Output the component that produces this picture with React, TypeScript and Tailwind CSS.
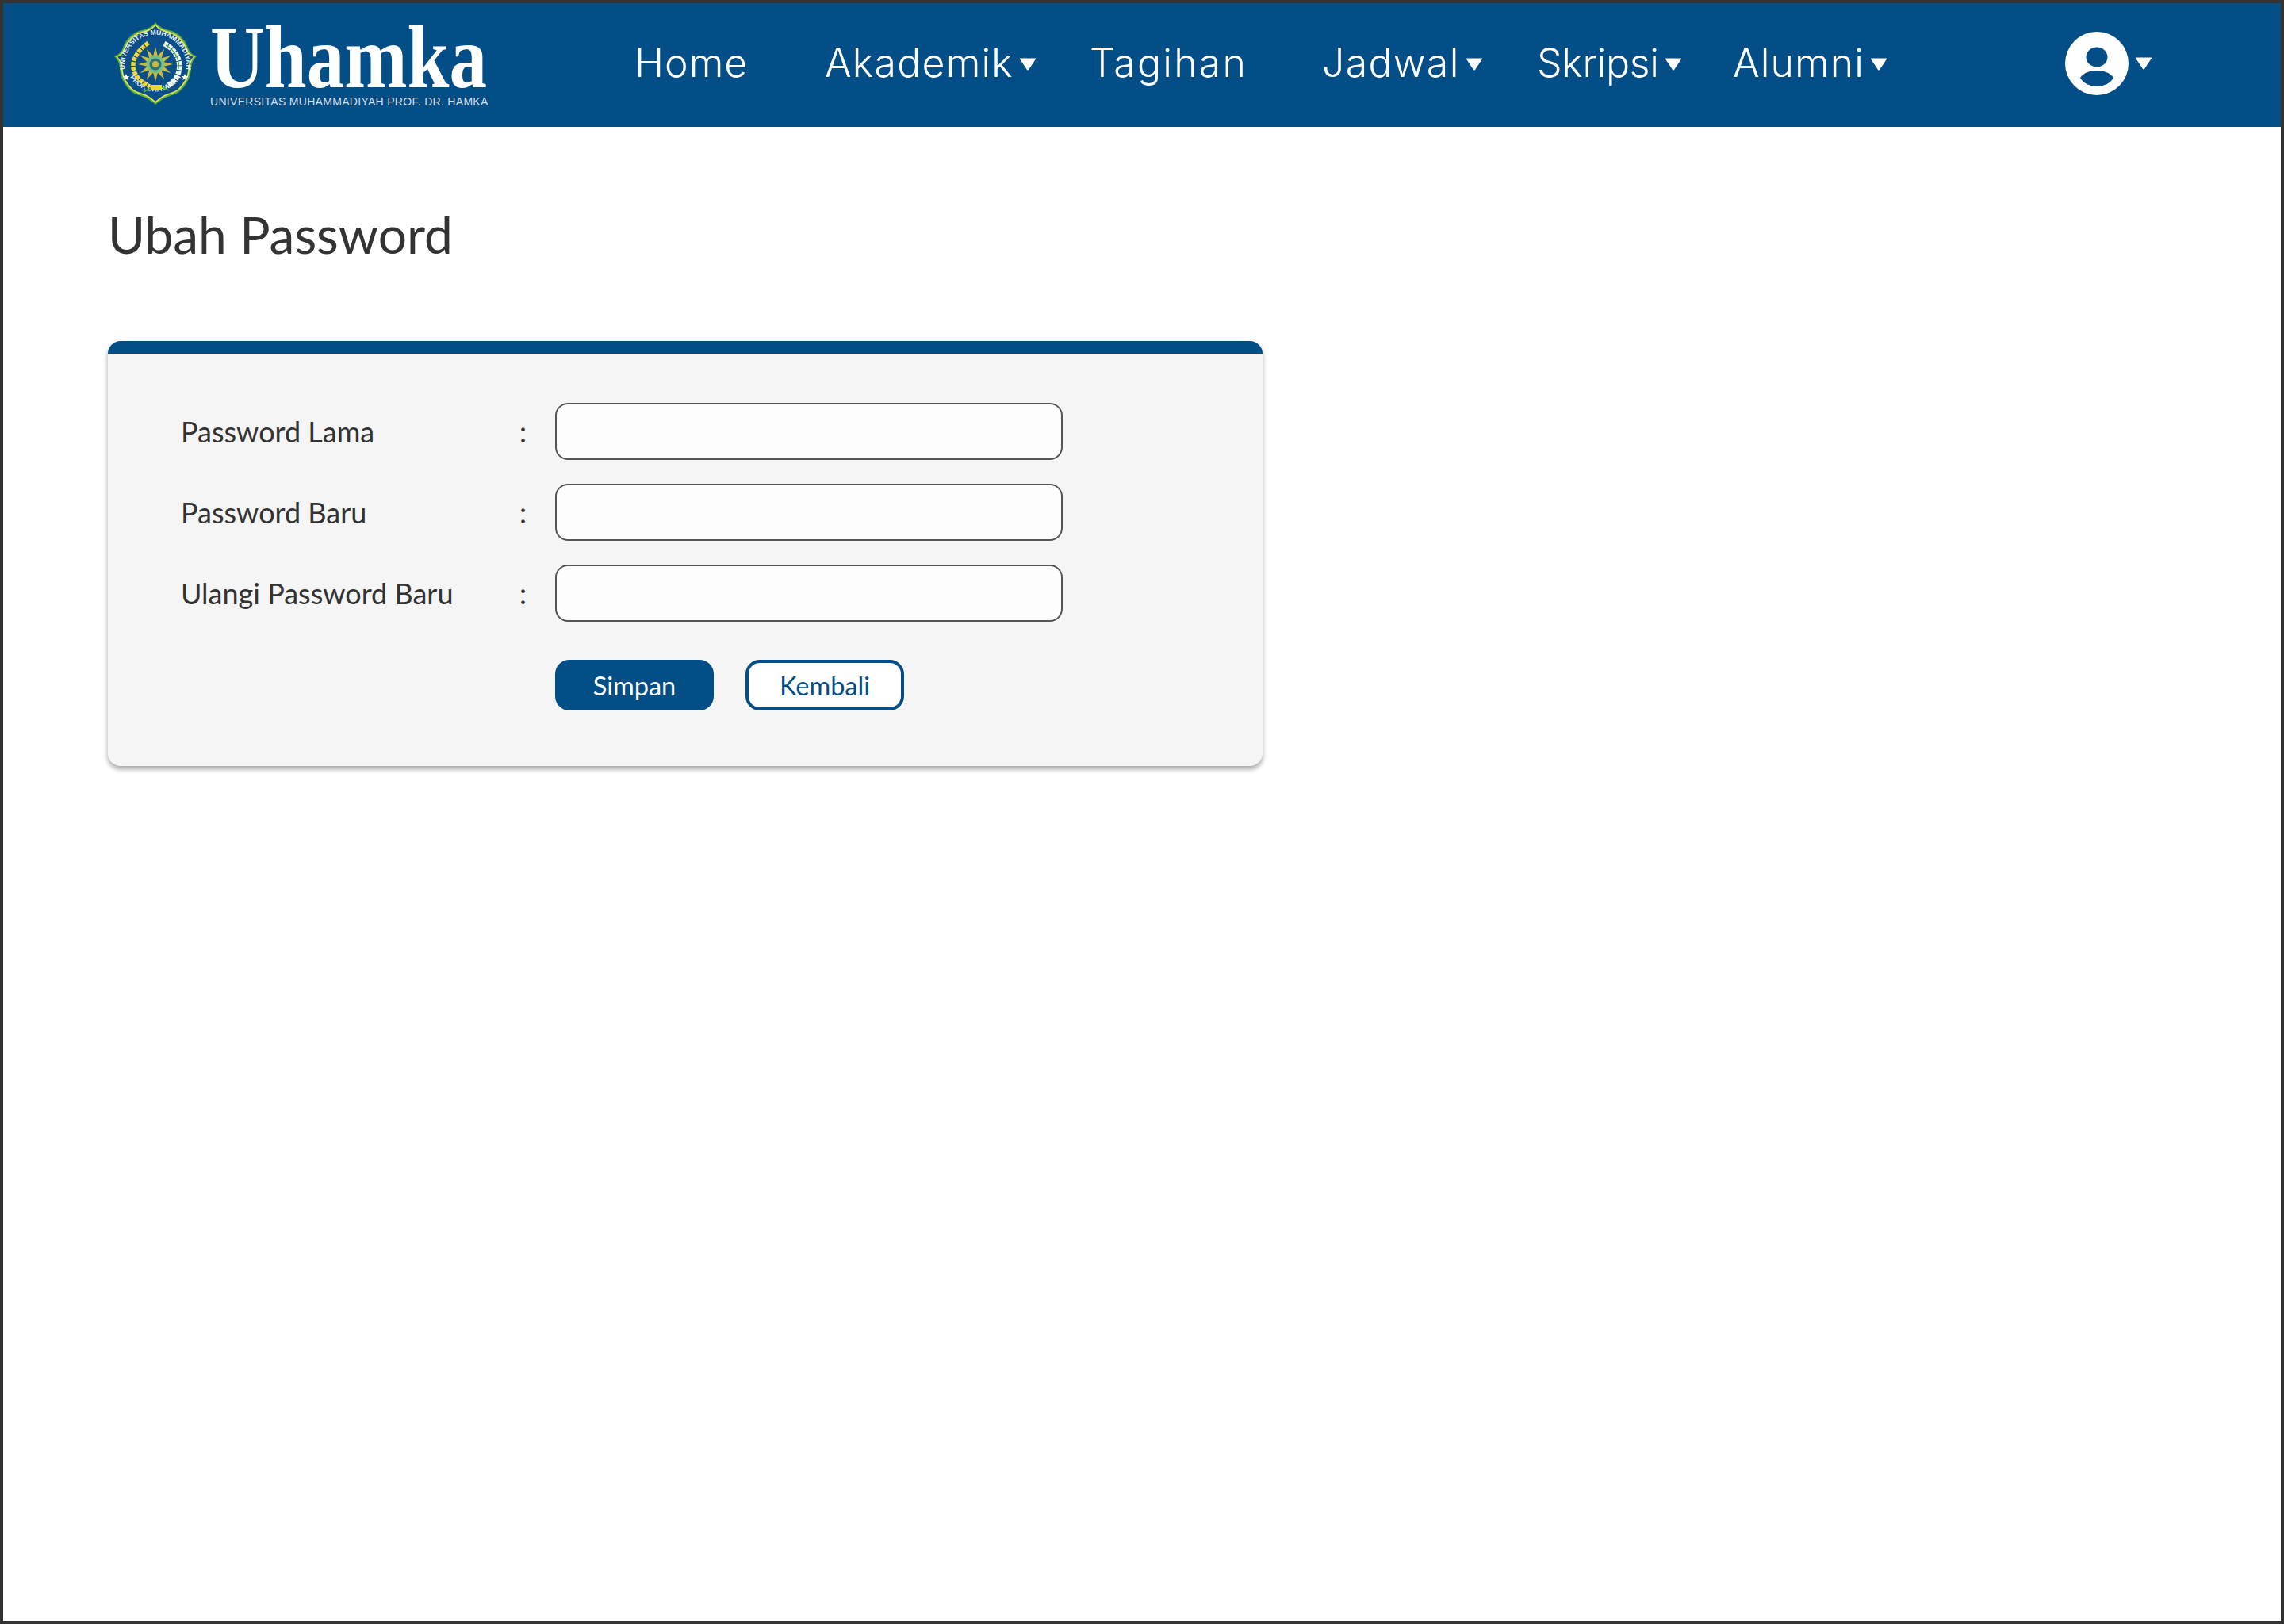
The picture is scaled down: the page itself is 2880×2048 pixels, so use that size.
import React from 'react';

const navItems = [
  { label: 'Home', width: 'w-[240px]', tracking: 'tracking-[1px]', caret: false },
  { label: 'Akademik', width: 'w-[334px]', tracking: 'tracking-[1.2px]', caret: true },
  { label: 'Tagihan', width: 'w-[293px]', tracking: 'tracking-[2.2px]', caret: false },
  { label: 'Jadwal', width: 'w-[271px]', tracking: 'tracking-[1.3px]', caret: true },
  { label: 'Skripsi', width: 'w-[247px]', tracking: 'tracking-[-0.3px]', caret: true },
  { label: 'Alumni', width: 'w-[250px]', tracking: 'tracking-[1.1px]', caret: true },
];

const fields = ['Password Lama', 'Password Baru', 'Ulangi Password Baru'];

const Caret: React.FC<{ className: string }> = ({ className }) => (
  <svg width="22" height="16" viewBox="0 0 22 16" className={className}>
    <path d="M1 1.5 Q0.5 0.5 2 0.5 H20 Q21.5 0.5 21 1.5 L12 15 Q11 16 10 15 Z" fill="#fff" />
  </svg>
);

const Emblem: React.FC = () => {
  const shape =
    'M53 1 C58 8 66 10 74 12 C84 16 91 24 94 33 C96 39 100 42 105 44 C101 48 98 53 98 60 C97 72 92 80 84 88 C78 93 72 93 66 96 C61 98 57 102 53 105 C49 102 45 98 40 96 C34 93 28 93 22 88 C14 80 9 72 8 60 C8 53 5 48 1 44 C6 42 10 39 12 33 C15 24 22 16 32 12 C40 10 48 8 53 1 Z';
  const points: string[] = [];
  for (let i = 0; i < 24; i++) {
    const r = i % 2 === 0 ? 22 : 11;
    const a = (i * Math.PI) / 12;
    points.push(`${53 + r * Math.sin(a)},${54 - r * Math.cos(a)}`);
  }
  return (
    <svg width="106" height="106" viewBox="0 0 106 106" className="shrink-0">
      <path d={shape} fill="#4fae4a" />
      <path d={shape} fill="#e3e04a" transform="translate(53 53) scale(.96) translate(-53 -53)" />
      <path d={shape} fill="#0b4f8a" transform="translate(53 53) scale(.92) translate(-53 -53)" />
      <defs>
        <path id="arcTop" d="M14.5 62 A39 39 0 1 1 91.5 62" />
        <path id="arcBottom" d="M21 70 A37 37 0 0 0 85 70" />
      </defs>
      <text fontFamily="'Liberation Sans', sans-serif" fontSize="8.6" fontWeight="700" fill="#e8eef4">
        <textPath href="#arcTop" startOffset="50%" textAnchor="middle">UNIVERSITAS MUHAMMADIYAH</textPath>
      </text>
      <text fontFamily="'Liberation Sans', sans-serif" fontSize="8.6" fontWeight="700" fill="#e8eef4">
        <textPath href="#arcBottom" startOffset="50%" textAnchor="middle">PROF. DR. HAMKA</textPath>
      </text>
      <path d="M17 69 l1.2 3 3.2 .1 -2.5 2 .9 3 -2.8 -1.7 -2.8 1.7 .9 -3 -2.5 -2 3.2 -.1 Z" fill="#fff" transform="translate(-1 -3)" />
      <path d="M89 69 l1.2 3 3.2 .1 -2.5 2 .9 3 -2.8 -1.7 -2.8 1.7 .9 -3 -2.5 -2 3.2 -.1 Z" fill="#fff" transform="translate(1 -3)" />
      <path d="M44 27 C32 36 24 46 25 58 C26 68 34 76 46 82" fill="none" stroke="#f3d535" strokeWidth="5.5" strokeDasharray="5 1.2" />
      <path d="M64 28 C76 34 85 46 83 60 C82 70 75 78 68 81" fill="none" stroke="#eef7ea" strokeWidth="6.5" strokeDasharray="5 1" />
      <path d="M66 30 C77 36 84 47 82 60" fill="none" stroke="#42a85a" strokeWidth="1.2" />
      <polygon points={points.join(' ')} fill="#c9b93c" />
      <circle cx="53" cy="54" r="11" fill="#6fc08a" />
      <circle cx="53" cy="54" r="7.5" fill="#2e6f78" />
      <circle cx="53" cy="54" r="4" fill="#c9b93c" />
      <path d="M47 80 L61 80 L61 86 L47 86 Z" fill="#f3d535" />
      <path d="M38 89 L47 84 M70 87 L61 83" stroke="#4fae4a" strokeWidth="1.5" />
    </svg>
  );
};

const Avatar: React.FC = () => (
  <svg width="80" height="80" viewBox="0 0 80 80" className="shrink-0">
    <circle cx="40" cy="40" r="40" fill="#fff" />
    <ellipse cx="40" cy="32" rx="13.5" ry="12.5" fill="#034e86" />
    <path d="M19 58 C24 51 32 49 40 49 C48 49 56 51 61 58 C57 65 49 69 40 69 C31 69 23 65 19 58 Z" fill="#034e86" />
  </svg>
);

export default function App() {
  return (
    <div className="w-full h-[2048px] box-border border-4 border-[#333333] bg-white font-['Lato',sans-serif] text-[#333333]">
      <header className="h-[156px] bg-[#034e86] flex items-center text-white">
        <div className="ml-[139px] mb-[4px] w-[657px] flex items-center shrink-0">
          <Emblem />
          <div className="ml-[16px] mt-[6px] flex flex-col w-[350px]">
            <span className="font-['Liberation_Serif',serif] font-bold text-[112px] leading-[84px] h-[84px] whitespace-nowrap origin-left scale-x-[0.85]">
              Uhamka
            </span>
            <span className="font-['Liberation_Sans',sans-serif] text-[14px] leading-[16px] mt-[6px] tracking-[0.3px] whitespace-nowrap text-[#d3dde8]">
              UNIVERSITAS MUHAMMADIYAH PROF. DR. HAMKA
            </span>
          </div>
        </div>
        <nav className="flex items-center mb-[6px] font-['Inter',sans-serif] font-light text-[50px] leading-none">
          {navItems.map((item) => (
            <div key={item.label} className={`flex items-center shrink-0 ${item.width}`}>
              <span className={item.tracking}>{item.label}</span>
              {item.caret && <Caret className="shrink-0 ml-[7px] mt-[4px]" />}
            </div>
          ))}
        </nav>
        <div className="ml-[169px] mb-[4px] flex items-center">
          <Avatar />
          <Caret className="shrink-0 ml-2" />
        </div>
      </header>

      <main className="px-[132px]">
        <h1 className="pt-[96px] text-[64px] leading-[80px] font-normal text-[#333333]">Ubah Password</h1>

        <div className="mt-[94px] w-[1456px] h-[536px] rounded-[16px] border-t-[16px] border-[#034e86] bg-[#f5f5f5] shadow-[0_4px_6px_rgba(0,0,0,0.35)] pl-[92px] pt-[62px]">
          <div className="flex flex-col gap-[30px]">
            {fields.map((field) => (
              <div key={field} className="flex items-center h-[72px]">
                <label className="w-[427px] text-[36px] leading-none">{field}</label>
                <span className="w-[45px] text-[36px] leading-none">:</span>
                <input
                  type="password"
                  aria-label={field}
                  className="w-[640px] h-[72px] rounded-[16px] border-2 border-[#555555] bg-[#fdfdfd]"
                />
              </div>
            ))}
          </div>
          <div className="flex gap-[40px] ml-[472px] mt-[48px]">
            <button className="w-[200px] h-[64px] pt-[2px] rounded-[18px] bg-[#034e86] text-white text-[32.5px] leading-none">
              Simpan
            </button>
            <button className="w-[200px] h-[64px] pt-[2px] rounded-[18px] border-4 border-[#034e86] bg-white text-[#034e86] text-[32.5px] leading-none">
              Kembali
            </button>
          </div>
        </div>
      </main>
    </div>
  );
}
